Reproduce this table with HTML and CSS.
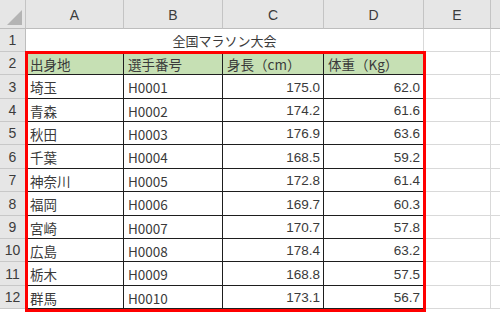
FILE: index.html
```html
<!DOCTYPE html>
<html lang="ja">
<head>
<meta charset="utf-8">
<link rel="stylesheet" href="styles.css">
</head>
<body>
<div class="sheet">
  <div class="corner"><span class="tri"></span></div>
  <div class="ch">A</div><div class="ch">B</div><div class="ch">C</div><div class="ch">D</div><div class="ch">E</div><div class="ch last"></div>

  <div class="rh">1</div>
  <div class="title">全国マラソン大会</div>
  <div class="c"></div><div class="c last"></div>

  <div class="rh">2</div>
  <div class="t hd">出身地</div><div class="t hd">選手番号</div><div class="t hd">身長（cm）</div><div class="t hd">体重（Kg）</div>
  <div class="c"></div><div class="c last"></div>

  <div class="rh">3</div>
  <div class="t">埼玉</div><div class="t">H0001</div><div class="t n">175.0</div><div class="t n">62.0</div>
  <div class="c"></div><div class="c last"></div>

  <div class="rh">4</div>
  <div class="t">青森</div><div class="t">H0002</div><div class="t n">174.2</div><div class="t n">61.6</div>
  <div class="c"></div><div class="c last"></div>

  <div class="rh">5</div>
  <div class="t">秋田</div><div class="t">H0003</div><div class="t n">176.9</div><div class="t n">63.6</div>
  <div class="c"></div><div class="c last"></div>

  <div class="rh">6</div>
  <div class="t">千葉</div><div class="t">H0004</div><div class="t n">168.5</div><div class="t n">59.2</div>
  <div class="c"></div><div class="c last"></div>

  <div class="rh">7</div>
  <div class="t">神奈川</div><div class="t">H0005</div><div class="t n">172.8</div><div class="t n">61.4</div>
  <div class="c"></div><div class="c last"></div>

  <div class="rh">8</div>
  <div class="t">福岡</div><div class="t">H0006</div><div class="t n">169.7</div><div class="t n">60.3</div>
  <div class="c"></div><div class="c last"></div>

  <div class="rh">9</div>
  <div class="t">宮崎</div><div class="t">H0007</div><div class="t n">170.7</div><div class="t n">57.8</div>
  <div class="c"></div><div class="c last"></div>

  <div class="rh">10</div>
  <div class="t">広島</div><div class="t">H0008</div><div class="t n">178.4</div><div class="t n">63.2</div>
  <div class="c"></div><div class="c last"></div>

  <div class="rh">11</div>
  <div class="t">栃木</div><div class="t">H0009</div><div class="t n">168.8</div><div class="t n">57.5</div>
  <div class="c"></div><div class="c last"></div>

  <div class="rh">12</div>
  <div class="t">群馬</div><div class="t">H0010</div><div class="t n">173.1</div><div class="t n">56.7</div>
  <div class="c"></div><div class="c last"></div>

  <div class="range"></div>
</div>
</body>
</html>
```
FILE: styles.css
```css
html, body {
  margin: 0;
  padding: 0;
  background: #ffffff;
}
body {
  width: 500px;
  height: 312px;
  overflow: hidden;
  font-family: "Noto Sans CJK JP", "Liberation Sans", sans-serif;
  color: #333333;
}
.sheet {
  position: relative;
  display: grid;
  grid-template-columns: 26px 98px 99px 101px 100px 67px 9px;
  grid-template-rows: 29px 23px 23px 24px 23px 23px 24px 23px 24px 23px 23px 24px 23px;
}
.sheet > div {
  box-sizing: border-box;
  min-width: 0;
}
.corner {
  position: relative;
  background: #e6e6e6;
  border-right: 1px solid #c4c4c4;
  border-bottom: 1px solid #bdbdbd;
}
.tri {
  position: absolute;
  right: 3px;
  bottom: 3px;
  width: 0;
  height: 0;
  border-left: 15px solid transparent;
  border-bottom: 15px solid #b4b4b4;
}
.ch {
  background: #e6e6e6;
  border-right: 1px solid #c4c4c4;
  border-bottom: 1px solid #bdbdbd;
  display: flex;
  align-items: center;
  justify-content: center;
  padding-top: 2px;
  font-family: "Liberation Sans", sans-serif;
  font-size: 14px;
  color: #3c3c3c;
}
.ch.last {
  border-right: none;
}
.rh {
  background: #e6e6e6;
  border-right: 1px solid #bdbdbd;
  border-bottom: 1px solid #c8c8c8;
  display: flex;
  align-items: center;
  justify-content: center;
  font-family: "Liberation Sans", sans-serif;
  font-size: 14px;
  color: #3c3c3c;
}
.c {
  border-right: 1px solid #d9d9d9;
  border-bottom: 1px solid #d9d9d9;
}
.c.last {
  border-right: none;
}
.title {
  grid-column: span 4;
  border-right: 1px solid #d9d9d9;
  border-bottom: 1px solid #d9d9d9;
  display: flex;
  align-items: center;
  justify-content: center;
  font-size: 13px;
  padding-top: 1px;
  color: #3a3a3a;
}
.t {
  border-right: 1px solid #1e1e1e;
  border-bottom: 1px solid #1e1e1e;
  display: flex;
  align-items: center;
  padding: 1px 3px 0 4px;
  font-size: 13.5px;
  white-space: nowrap;
  overflow: hidden;
  color: #3a3a3a;
}
.hd {
  background: #c6e0b4;
}
.n {
  justify-content: flex-end;
  font-family: "Liberation Sans", sans-serif;
  font-size: 13.5px;
}
.range {
  position: absolute;
  left: 25px;
  top: 51px;
  width: 401px;
  height: 261px;
  box-sizing: border-box;
  border: 3px solid #ff0000;
  pointer-events: none;
}
```
